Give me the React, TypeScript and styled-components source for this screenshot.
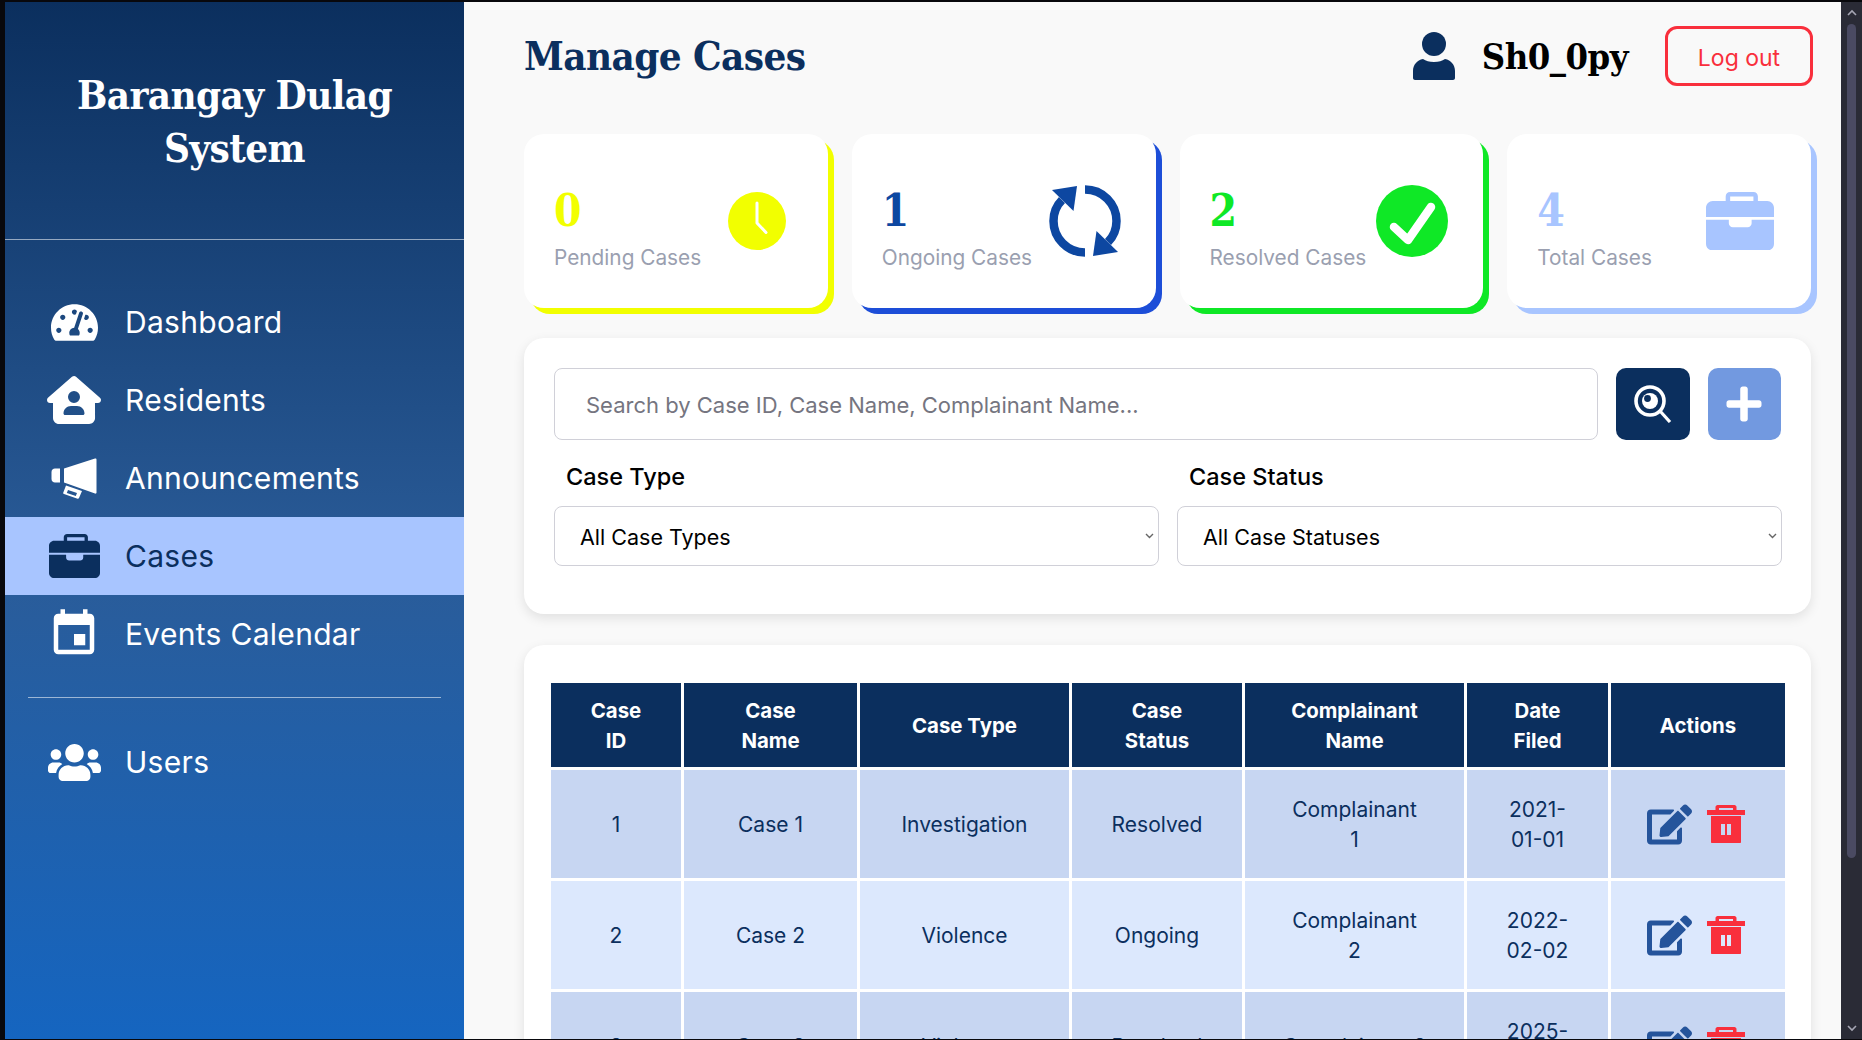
import React from "react";
import styled, { createGlobalStyle } from "styled-components";
import { FaHouseUser } from "react-icons/fa6";
import { FaTachometerAlt, FaUsers, FaEdit, FaPlus } from "react-icons/fa";
import { MdEvent } from "react-icons/md";

const BODY = `"Inter", "Noto Sans", sans-serif`;
const SLAB = `"DejaVu Serif Condensed", "DejaVu Serif", serif`;
const NAVY = "#0b2f5e";

const Global = createGlobalStyle`
  html, body { margin: 0; padding: 0; height: 100%; background: #08080c; overflow: hidden; }
  #root { height: 100%; }
  * { box-sizing: border-box; }
`;

const Frame = styled.div`
  display: flex;
  height: 1040px;
  padding: 2px 0 1px 5px;
  font-family: ${BODY};
`;

const Sidebar = styled.aside`
  width: 459px;
  flex: none;
  color: #fff;
  background: linear-gradient(180deg, #0b2f5e 0%, #2a5c99 55%, #1565c0 100%);
`;

const Brand = styled.div`
  height: 238px;
  display: flex;
  align-items: center;
  justify-content: center;
  border-bottom: 1px solid rgba(255, 255, 255, 0.55);
`;

const BrandTitle = styled.h1`
  margin: 0;
  width: 340px;
  text-align: center;
  font: 700 40px/53px ${SLAB};
  font-stretch: condensed;
  letter-spacing: -0.6px;
`;

const Nav = styled.nav`
  margin-top: 43px;
`;

const NavItem = styled.div<{ $active?: boolean }>`
  height: 78px;
  display: flex;
  align-items: center;
  gap: 21px;
  padding-left: 39px;
  font-size: 30px;
  letter-spacing: 0.3px;
  color: ${(p) => (p.$active ? NAVY : "#fff")};
  background: ${(p) => (p.$active ? "#a8c5ff" : "transparent")};
`;

const NavIcon = styled.span`
  width: 60px;
  height: 60px;
  flex: none;
  display: flex;
  align-items: center;
  justify-content: center;
`;

const NavRule = styled.hr`
  margin: 24px 23px 25px;
  border: 0;
  border-top: 1px solid rgba(255, 255, 255, 0.55);
`;

const Main = styled.main`
  flex: 1;
  min-width: 0;
  background: #f9f9f9;
  padding: 0 30px 0 60px;
  overflow: hidden;
`;

const Header = styled.header`
  height: 108px;
  margin-bottom: 24px;
  display: flex;
  align-items: center;
`;

const PageTitle = styled.h2`
  margin: 0 auto 0 0;
  font: 700 40px/50px ${SLAB};
  font-stretch: condensed;
  letter-spacing: -0.6px;
  color: ${NAVY};
`;

const UserName = styled.span`
  margin: 0 37px 0 27px;
  font: 700 36px/40px ${SLAB};
  font-stretch: condensed;
  letter-spacing: -0.5px;
  color: #000;
`;

const LogoutButton = styled.button`
  width: 148px;
  height: 60px;
  margin-right: -2px;
  padding: 3px 0 0;
  background: transparent;
  border: 3px solid #f92f3c;
  border-radius: 12px;
  color: #f92f3c;
  font: 400 23px ${BODY};
`;

const Stats = styled.section`
  display: grid;
  grid-template-columns: repeat(4, 1fr);
  gap: 24px;
  margin-bottom: 30px;
`;

const StatCard = styled.div<{ $accent: string }>`
  height: 174px;
  padding: 0 33px 0 30px;
  background: #fff;
  border-radius: 20px;
  box-shadow: 6px 6px 0 ${(p) => p.$accent};
  display: flex;
  align-items: center;
  justify-content: space-between;
`;

const StatText = styled.div`
  display: flex;
  flex-direction: column;
  padding-top: 13px;
`;

const StatValue = styled.span<{ $color: string }>`
  font: 700 44px/52px ${SLAB};
  font-stretch: condensed;
  color: ${(p) => p.$color};
`;

const StatLabel = styled.span`
  margin-top: 8px;
  font-size: 20.8px;
  line-height: 26px;
  color: #9a9fb0;
`;

const StatIcon = styled.span`
  width: 76px;
  flex: none;
  display: flex;
  justify-content: center;
  color: #a8c5ff;
`;

const Panel = styled.section`
  background: #fff;
  border-radius: 20px;
  box-shadow: 0 4px 12px rgba(0, 0, 0, 0.1);
`;

const FilterPanel = styled(Panel)`
  height: 276px;
  padding: 30px 30px 0 30px;
  margin-bottom: 31px;
`;

const SearchRow = styled.div`
  display: flex;
  gap: 18px;
  margin-bottom: 17px;
`;

const SearchInput = styled.input`
  flex: 1;
  min-width: 0;
  height: 72px;
  padding: 2px 31px 0;
  border: 1px solid #d0d0d8;
  border-radius: 8px;
  background: #fff;
  font: 400 22px ${BODY};
  &::placeholder { color: #757580; }
`;

const SquareButton = styled.button<{ $bg: string }>`
  width: 73.5px;
  height: 72px;
  padding: 0;
  border: 0;
  border-radius: 10px;
  background: ${(p) => p.$bg};
  color: #fff;
  display: flex;
  align-items: center;
  justify-content: center;
`;

const Filters = styled.div`
  display: grid;
  grid-template-columns: 605px 605px;
  gap: 18px;
`;

const FilterField = styled.label`
  display: flex;
  flex-direction: column;
`;

const FilterLabel = styled.span`
  height: 40px;
  margin-bottom: 9px;
  padding-left: 12px;
  font-size: 23.5px;
  font-weight: 500;
  line-height: 40px;
  color: #000;
`;

const FilterSelect = styled.select`
  appearance: none;
  height: 60px;
  padding: 2px 25px 0;
  border: 1px solid #d0d0d8;
  border-radius: 8px;
  background: #fff url("data:image/svg+xml,%3Csvg xmlns='http://www.w3.org/2000/svg' width='9' height='6' viewBox='0 0 9 6'%3E%3Cpath d='M1 1l3.5 3.500L8 1' fill='none' stroke='%23666' stroke-width='1.400'/%3E%3C/svg%3E") no-repeat right 4px center;
  color: #000;
  font: 400 21.5px ${BODY};
`;

const TablePanel = styled(Panel)`
  padding: 35px 23px 0 24px;
`;

const Table = styled.table`
  width: 1240px;
  table-layout: fixed;
  border-collapse: separate;
  border-spacing: 3px;
  background: #fff;
`;

const Th = styled.th`
  height: 84px;
  padding: 2px 8px 0;
  background: ${NAVY};
  color: #fff;
  font-size: 20.4px;
  font-weight: 700;
  line-height: 30px;
  text-align: center;
  white-space: pre-line;
`;

const Tr = styled.tr<{ $odd: boolean }>`
  background: ${(p) => (p.$odd ? "#c7d6f2" : "#dce8fd")};
`;

const Td = styled.td`
  height: 108px;
  padding: 2px 8px 0;
  color: ${NAVY};
  font-size: 21px;
  line-height: 30px;
  text-align: center;
  white-space: pre-line;
`;

const Actions = styled.div`
  display: flex;
  align-items: center;
  justify-content: center;
  gap: 15px;
  margin-top: -2px;
  padding-right: 5px;
  color: #25549b;
`;

const Scrollbar = styled.div`
  width: 21px;
  flex: none;
  background: #2a2b36;
  display: flex;
  flex-direction: column;
  align-items: center;
`;

const ScrollArrow = styled.span`
  height: 22px;
  flex: none;
  color: #a6a6b4;
  display: flex;
  align-items: center;
`;

const ScrollThumb = styled.div`
  width: 9px;
  height: 834px;
  flex: none;
  border-radius: 5px;
  background: #4a4a62;
`;

const ScrollSpace = styled.div`
  flex: 1;
`;

const Caret = ({ up }: { up?: boolean }) => (
  <svg width="10" height="8" viewBox="0 0 10 8">
    <path d={up ? "M1 6l4-4 4 4" : "M1 2l4 4 4-4"} fill="none" stroke="currentColor" strokeWidth="1.6" />
  </svg>
);

const BriefcaseIcon = ({ width }: { width: number }) => (
  <svg width={width} height={(width * 131) / 152} viewBox="0 0 152 131" fill="currentColor">
    <path
      fillRule="evenodd"
      d="M44 20V10C44 4 48 0 54 0H106C112 0 116 4 116 10V20H137C145 20 152 27 152 35V56H0V35C0 27 7 20 15 20ZM54 20H106V10H54Z"
    />
    <path d="M0 62H51V70C51 75 55 79 60 79H93C98 79 102 75 102 70V62H152V116C152 124 145 131 137 131H15C7 131 0 124 0 116Z" />
  </svg>
);

const MegaphoneIcon = () => (
  <svg width="46" height="41" viewBox="0 0 46 41" fill="#fff">
    <path d="M13 10.500 44 .5c1-.3 1.500.2 1.500 1v33c0 1-.6 1.400-1.500 1L13 24.500z" />
    <path d="M9 10.500v14H4c-2 0-3.500-1.500-3.500-3.500v-7C.5 12 2 10.500 4 10.500z" />
    <path fillRule="evenodd" d="M15 27.500 31 33l-3 7c-.3.6-.8.9-1.400.7L13 36c-.7-.2-1-.8-.7-1.500zM17 32l-1.200 3 9 3 1.200-3z" />
  </svg>
);

const UserIcon = () => (
  <svg width="42" height="48" viewBox="0 0 42 48" fill={NAVY}>
    <ellipse cx="21" cy="12" rx="12" ry="12" />
    <path d="M10 27c3 2 6 3 11 3s8-1 11-3c6 1 10 6 10 12v7c0 1-1 2-2 2H2c-1 0-2-1-2-2v-7c0-6 4-11 10-12z" />
  </svg>
);

const ClockIcon = () => (
  <svg width="58" height="58" viewBox="0 0 58 58">
    <circle cx="29" cy="29" r="29" fill="#f2ff00" />
    <path d="M29 11v20l9 9.500" fill="none" stroke="#fff" strokeWidth="3" strokeLinecap="round" strokeLinejoin="round" />
  </svg>
);

const SyncIcon = () => (
  <svg width="72" height="72" viewBox="0 0 72 72">
    <g fill="#0d47a1">
      <path d="M3 5 28 1l-3.500 25z" />
      <path d="M69 67 44 71l3.500-25z" />
    </g>
    <g fill="none" stroke="#0d47a1" strokeWidth="8.500">
      <path d="M36 67.500C18.600 67.500 4.500 53.400 4.500 36c0-8 3-15.500 8.500-21" />
      <path d="M36 4.500C53.400 4.500 67.500 18.600 67.500 36c0 8-3 15.500-8.500 21" />
    </g>
  </svg>
);

const CheckIcon = () => (
  <svg width="72" height="72" viewBox="0 0 72 72">
    <circle cx="36" cy="36" r="36" fill="#0fe826" />
    <path d="M18 42l14 13 23-33" fill="none" stroke="#fff" strokeWidth="8.500" strokeLinecap="round" strokeLinejoin="round" />
  </svg>
);

const EyeSearchIcon = () => (
  <svg width="38" height="38" viewBox="0 0 38 38">
    <circle cx="16" cy="16" r="14" fill="none" stroke="#fff" strokeWidth="3.600" />
    <circle cx="16" cy="16" r="8" fill="#fff" />
    <circle cx="13.500" cy="13.500" r="3.400" fill={NAVY} />
    <path d="M26 26l10 11" stroke="#fff" strokeWidth="3.200" />
  </svg>
);

const TrashIcon = () => (
  <svg width="38" height="38" viewBox="0 0 38 38" fill="#f92f3c">
    <path fillRule="evenodd" d="M8.500 5V2c0-1 1-2 2-2h17c1 0 2 1 2 2v3H38v5H0V5zM12 3v2h14V3z" />
    <path fillRule="evenodd" d="M4 11h30v26c0 .6-.4 1-1 1H5c-.6 0-1-.4-1-1zM14 19v11h4V19zM20 19v11h4V19z" />
  </svg>
);

const navItems = [
  { label: "Dashboard", icon: <FaTachometerAlt size={47} /> },
  { label: "Residents", icon: <FaHouseUser size={54} /> },
  { label: "Announcements", icon: <MegaphoneIcon /> },
  { label: "Cases", icon: <BriefcaseIcon width={51} />, active: true },
  { label: "Events Calendar", icon: <MdEvent size={54} /> },
];

const stats = [
  { value: "0", label: "Pending Cases", color: "#f2ff00", accent: "#f2ff00", icon: <ClockIcon /> },
  { value: "1", label: "Ongoing Cases", color: "#0d47a1", accent: "#1d4ed8", icon: <SyncIcon /> },
  { value: "2", label: "Resolved Cases", color: "#0fe826", accent: "#0fe826", icon: <CheckIcon /> },
  { value: "4", label: "Total Cases", color: "#a8c5ff", accent: "#a8c5ff", icon: <BriefcaseIcon width={68} /> },
];

const columns = [
  { title: "Case\nID", width: 130 },
  { title: "Case\nName", width: 173 },
  { title: "Case Type", width: 209 },
  { title: "Case\nStatus", width: 170 },
  { title: "Complainant\nName", width: 219 },
  { title: "Date\nFiled", width: 141 },
  { title: "Actions", width: 174 },
];

const rows = [
  ["1", "Case 1", "Investigation", "Resolved", "Complainant\n1", "2021-\n01-01"],
  ["2", "Case 2", "Violence", "Ongoing", "Complainant\n2", "2022-\n02-02"],
  ["3", "Case 3", "Violence", "Resolved", "Complainant 3", "2025-\n03-03"],
];

export default function App() {
  return (
    <>
      <Global />
      <Frame>
        <Sidebar>
          <Brand>
            <BrandTitle>Barangay Dulag System</BrandTitle>
          </Brand>
          <Nav>
            {navItems.map((n) => (
              <NavItem key={n.label} $active={n.active}>
                <NavIcon>{n.icon}</NavIcon>
                {n.label}
              </NavItem>
            ))}
            <NavRule />
            <NavItem>
              <NavIcon>
                <FaUsers size={53} />
              </NavIcon>
              Users
            </NavItem>
          </Nav>
        </Sidebar>
        <Main>
          <Header>
            <PageTitle>Manage Cases</PageTitle>
            <UserIcon />
            <UserName>Sh0_0py</UserName>
            <LogoutButton>Log out</LogoutButton>
          </Header>
          <Stats>
            {stats.map((s) => (
              <StatCard key={s.label} $accent={s.accent}>
                <StatText>
                  <StatValue $color={s.color}>{s.value}</StatValue>
                  <StatLabel>{s.label}</StatLabel>
                </StatText>
                <StatIcon>{s.icon}</StatIcon>
              </StatCard>
            ))}
          </Stats>
          <FilterPanel>
            <SearchRow>
              <SearchInput placeholder="Search by Case ID, Case Name, Complainant Name..." />
              <SquareButton $bg={NAVY}>
                <EyeSearchIcon />
              </SquareButton>
              <SquareButton $bg="#7299e0">
                <FaPlus size={40} />
              </SquareButton>
            </SearchRow>
            <Filters>
              <FilterField>
                <FilterLabel>Case Type</FilterLabel>
                <FilterSelect>
                  <option>All Case Types</option>
                </FilterSelect>
              </FilterField>
              <FilterField>
                <FilterLabel>Case Status</FilterLabel>
                <FilterSelect>
                  <option>All Case Statuses</option>
                </FilterSelect>
              </FilterField>
            </Filters>
          </FilterPanel>
          <TablePanel>
            <Table>
              <colgroup>
                {columns.map((c) => (
                  <col key={c.title} style={{ width: c.width }} />
                ))}
              </colgroup>
              <thead>
                <tr>
                  {columns.map((c) => (
                    <Th key={c.title}>{c.title}</Th>
                  ))}
                </tr>
              </thead>
              <tbody>
                {rows.map((r, i) => (
                  <Tr key={r[0]} $odd={i % 2 === 0}>
                    {r.map((v, j) => (
                      <Td key={j}>{v}</Td>
                    ))}
                    <Td>
                      <Actions>
                        <FaEdit size={45} />
                        <TrashIcon />
                      </Actions>
                    </Td>
                  </Tr>
                ))}
              </tbody>
            </Table>
          </TablePanel>
        </Main>
        <Scrollbar>
          <ScrollArrow>
            <Caret up />
          </ScrollArrow>
          <ScrollThumb />
          <ScrollSpace />
          <ScrollArrow>
            <Caret />
          </ScrollArrow>
        </Scrollbar>
      </Frame>
    </>
  );
}
